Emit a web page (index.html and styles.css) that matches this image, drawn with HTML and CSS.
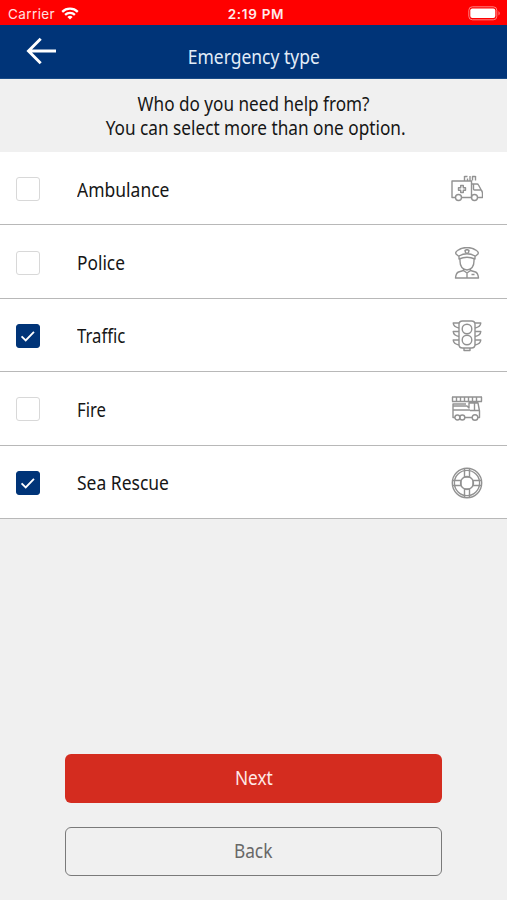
FILE: index.html
```html
<!DOCTYPE html>
<html lang="en">
<head>
<meta charset="utf-8">
<meta name="viewport" content="width=device-width, initial-scale=1">
<title>Emergency type</title>
<link rel="stylesheet" href="styles.css">
</head>
<body>
<div class="screen">
  <div class="status">
    <div class="carrier"><span>Carrier</span>
      <svg class="wifi" width="18" height="13" viewBox="0 0 18 13" fill="none" stroke="#fff" stroke-width="2.3"><path d="M1.2 4.8a11.3 11.3 0 0 1 15.6 0M4.1 7.9a7.1 7.1 0 0 1 9.8 0"/><path d="M9 12.5 6.4 9.9a3.8 3.8 0 0 1 5.2 0z" fill="#fff" stroke="none"/></svg>
    </div>
    <span class="time">2:19 PM</span>
    <svg class="battery" width="33" height="15" viewBox="0 0 33 15"><rect x=".8" y=".8" width="28" height="13" rx="3.5" fill="none" stroke="#ff8080"/><rect x="2.3" y="2.5" width="25" height="9.6" rx="2" fill="#fff"/><path d="M30.5 5q2.5 2.3 0 4.6z" fill="#ff8080"/></svg>
  </div>
  <header class="header">
    <svg class="arrow" width="32" height="28" viewBox="0 0 32 28" fill="none" stroke="#fff" stroke-width="2.9"><path d="M30 14H2.5M14.7 1.8 2.5 14l12.2 12.2"/></svg>
    <h1><span class="text t-title">Emergency type</span></h1>
  </header>
  <div class="prompt"><span class="text t-who">Who do you need help from?</span><span class="text t-you">You can select more than one option.</span></div>
  <ul class="list">
    <li><span class="box"></span><span class="label text t-amb">Ambulance</span>
      <svg class="icon" viewBox="0 0 32 32"><path d="M4.500 24.500H1V8h19.500v16.500H10.500M20.500 11H26q1 0 1.500 1l3 5.500q1 1.200 1 3v4h-4.600M22.500 11v5q0 1 1 1h7M13.500 7.500V3M13.500 3.500h3M16.500 7.500V5.500M19 7.500V3M21.500 7.500V3.500h3M24.500 3v4.500"/><circle cx="7.500" cy="24.500" r="3"/><circle cx="23.500" cy="24.500" r="3"/><path d="M9.700 12.500h2.600v2.200h2.200v2.600h-2.200v2.200H9.700v-2.200H7.500v-2.600h2.200z"/></svg></li>
    <li><span class="box"></span><span class="label text">Police</span>
      <svg class="icon" viewBox="0 0 32 32"><path d="M8 9.5 5 7q-1-2 1.500-3.500 4-3 9.500-3t9.500 3Q28 5 27 7l-3 2.500M8 9q8-4.500 16 0v3q-8-3.500-16 0zM9 12v2q0 8 7 9 7-1 7-9v-2M12.500 21v2.500L7.500 25Q5 26 4.500 31h23q-.5-5-3-6l-5-1.500V21M12.500 23.500l3.500 2.500 3.500-2.500M16 26v5"/><path d="m16 2.500 2 1-.5 2-1.500 1-1.500-1-.5-2zM20.500 27.500h3"/></svg></li>
    <li><span class="box checked"><svg viewBox="0 0 24 24"><path d="m5 12.500 4.500 4.400 9-9.400"/></svg></span><span class="label text t-tra">Traffic</span>
      <svg class="icon" viewBox="0 0 32 32"><path d="M11.500 1h9q3.500 0 3.500 3.500v20q0 3.500-3.500 3.500h-9Q8 28 8 24.500v-20Q8 1 11.500 1zM13 28v2.500h6V28"/><circle cx="16" cy="9" r="4.800"/><circle cx="16" cy="20" r="4.800"/><path d="M8 3H2.200q.3 4 5.800 5M8 11.500H2.200q.3 4 5.800 5M8 20H2.200q.3 4 5.800 5M24 3h5.800q-.3 4-5.800 5M24 11.500h5.800q-.3 4-5.800 5M24 20h5.800q-.3 4-5.800 5"/></svg></li>
    <li><span class="box"></span><span class="label text t-fir">Fire</span>
      <svg class="icon" viewBox="0 0 32 32"><path d="M1 4h30M1 8.500h30M1.500 4v4.500M5.500 4v4.500M9.500 4v4.500M13.500 4v4.500M17.500 4v4.500M21.500 4v4.500M25.500 4v4.500M30.500 4v4.500M4 24.500H2V11h13M13.500 24.500H21M27 24.500h1.500V18L27 10h-9v5l-2-2H2.500M19 17.500h9M23.500 10v7.500M2 17h17"/><circle cx="6.400" cy="24.500" r="2.500"/><circle cx="11.300" cy="24.500" r="2.500"/><circle cx="24" cy="24.500" r="2.800"/></svg></li>
    <li><span class="box checked"><svg viewBox="0 0 24 24"><path d="m5 12.500 4.500 4.400 9-9.400"/></svg></span><span class="label text t-sea">Sea Rescue</span>
      <svg class="icon" viewBox="0 0 32 32"><circle cx="16" cy="16" r="14.700"/><circle cx="16" cy="16" r="12.600"/><circle cx="16" cy="16" r="6.500"/><path d="M13.500 1.500v8.500h5V1.500M13.500 30.500V22h5v8.500M1.500 13.500H10v5H1.500M30.500 13.500H22v5h8.500"/></svg></li>
  </ul>
  <div class="actions">
    <button class="next"><span class="text">Next</span></button>
    <button class="back"><span class="text">Back</span></button>
  </div>
</div>
</body>
</html>
```
FILE: styles.css
```css
* { box-sizing: border-box; }
body { margin: 0; background: #f0f0f0; font-family: "Noto Sans", sans-serif; font-size: 19px; color: #161616; }
.screen { height: 900px; display: flex; flex-direction: column; overflow: hidden; }
.status { flex: none; height: 25px; padding: 3px 6px 0 8px; background: #f00; color: #fff; font: 13.5px/20px Inter, sans-serif; display: grid; grid-template-columns: 1fr auto 1fr; align-items: center; }
.carrier { display: flex; align-items: center; gap: 6px; color: #ffe0e0; letter-spacing: .4px; }
.wifi { margin-top: -2px; }
.time { font-weight: 600; letter-spacing: .7px; color: #ffeaea; padding-left: 3px; }
.battery { justify-self: end; margin-top: -2px; }
.header { flex: none; height: 54px; background: #003478; border-bottom: 1px solid #194b87; display: grid; grid-template-columns: 58px 1fr 58px; }
.arrow { margin: 12px 0 0 26px; }
.header h1 { margin: 0; padding-top: 19px; text-align: center; font-size: 19px; font-weight: 400; line-height: 26px; color: #e2edf8; }
.text { display: inline-block; white-space: nowrap; transform: scaleX(.91); }
.prompt { flex: none; height: 73px; padding-top: 14px; line-height: 23.5px; display: flex; flex-direction: column; align-items: center; }
.list { flex: none; list-style: none; margin: 0; padding: 0; }
.list li { height: 73.4px; padding: 2px 24px 0 16px; display: flex; align-items: center; background: #fff; border-bottom: 1.5px solid #b8b8b8; }
.box { flex: none; width: 24px; height: 24px; margin-right: 37px; border: 1.5px solid #d8d8d8; border-radius: 3px; }
.checked { background: #003478; border-color: #003478; }
.box svg { display: block; width: 100%; height: 100%; fill: none; stroke: #fff; stroke-width: 2; }
.label { flex: none; line-height: 26px; padding-top: 1px; transform-origin: left; }
.icon { width: 32px; height: 32px; margin-left: auto; fill: none; stroke: #929292; stroke-width: 1.4; stroke-linejoin: round; }
.actions { margin: auto 65px 24.5px; display: flex; flex-direction: column; gap: 24px; }
.actions button { height: 49px; padding: 0; border: 0; border-radius: 6px; font: 19px/26px "Noto Sans", sans-serif; }
.actions .next { color: #ffe9e7; background: #d42c1f; }
.actions .back { color: #686868; background: transparent; border: 1.5px solid #7a7a7a; }
.t-title { transform: scaleX(.92); }
.t-who { transform: scaleX(.902); }
.t-you { transform: translateX(2px) scaleX(.905); }
.t-amb, .t-sea { transform: scaleX(.92); }
.t-tra, .t-fir { transform: scaleX(.88); }
```
